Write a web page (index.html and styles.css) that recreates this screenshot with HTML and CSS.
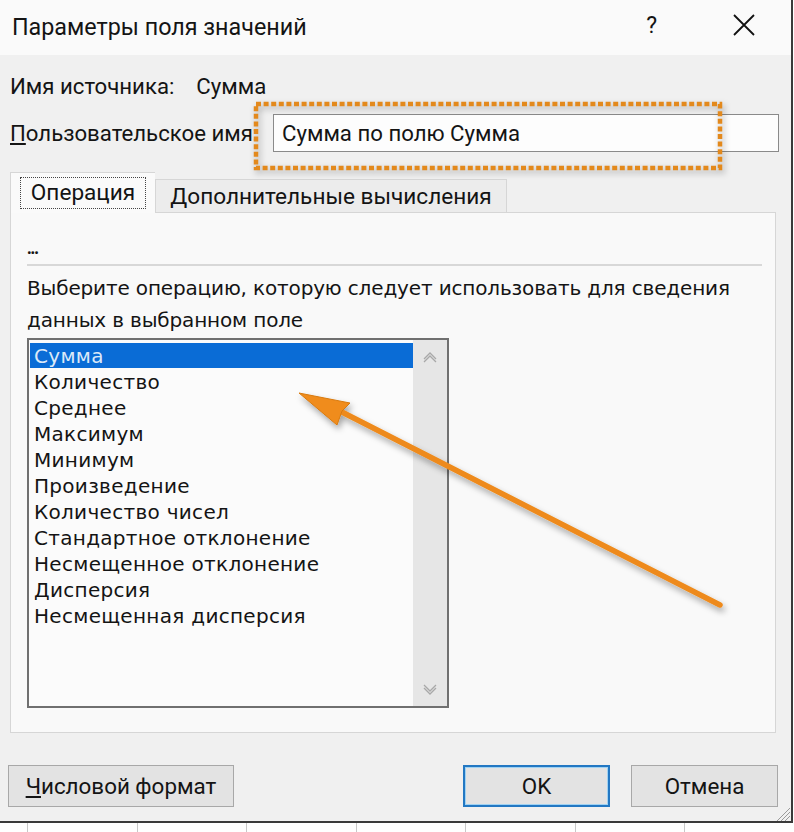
FILE: index.html
```html
<!DOCTYPE html>
<html lang="ru">
<head>
<meta charset="utf-8">
<title>Параметры поля значений</title>
<link rel="stylesheet" href="styles.css">
</head>
<body>
<div class="window">
  <div class="titlebar">
    <span class="title">Параметры поля значений</span>
    <span class="help">?</span>
    <svg class="close" width="22" height="22" viewBox="0 0 22 22"><path d="M1 1L21 21M21 1L1 21" stroke="#111" stroke-width="1.8" fill="none"/></svg>
  </div>
  <div class="body">
    <div class="source-row">
      <span class="src-label">Имя источника:</span>
      <span class="src-value">Сумма</span>
    </div>
    <div class="name-row">
      <span class="name-label"><u>П</u>ользовательское имя:</span>
      <div class="name-input">Сумма по полю Сумма</div>
    </div>
    <div class="tabs">
      <div class="tab active"><span class="focus">Операция</span></div>
      <div class="tab">Дополнительные вычисления</div>
    </div>
    <div class="panel">
      <div class="dots">...</div>
      <div class="sep"></div>
      <p class="desc">Выберите операцию, которую следует использовать для сведения данных в выбранном поле</p>
      <div class="listbox">
        <ul class="items">
          <li class="selected">Сумма</li>
          <li>Количество</li>
          <li>Среднее</li>
          <li>Максимум</li>
          <li>Минимум</li>
          <li>Произведение</li>
          <li>Количество чисел</li>
          <li>Стандартное отклонение</li>
          <li>Несмещенное отклонение</li>
          <li>Дисперсия</li>
          <li>Несмещенная дисперсия</li>
        </ul>
        <div class="scrollbar">
          <svg width="16" height="12" viewBox="0 0 16 12"><path d="M2 10L8 4L14 10M2 7L8 1L14 7" stroke="#a8a8a8" stroke-width="1.3" fill="none"/></svg>
          <svg width="16" height="12" viewBox="0 0 16 12"><path d="M2 2L8 8L14 2M2 5L8 11L14 5" stroke="#a8a8a8" stroke-width="1.3" fill="none"/></svg>
        </div>
      </div>
    </div>
    <div class="buttons">
      <button class="btn fmt"><u>Ч</u>исловой формат</button>
      <div class="spacer"></div>
      <button class="btn ok">OK</button>
      <button class="btn cancel">Отмена</button>
    </div>
  </div>
  <svg class="grip" width="16" height="14" viewBox="0 0 16 14"><path d="M15 1L2 14M15 5L6 14M15 9L10 14" stroke="#9a9a9a" stroke-width="1"/></svg>
  <svg class="highlight" width="476" height="76" viewBox="0 0 476 76"><rect x="5" y="5" width="464" height="64" fill="none" stroke="#e3891c" stroke-width="4.5" stroke-dasharray="5 2.6"/></svg>
  <svg class="arrow" width="794" height="832" viewBox="0 0 794 832">
    <defs>
      <filter id="sh" x="-10%" y="-10%" width="120%" height="130%">
        <feDropShadow dx="2" dy="4" stdDeviation="3" flood-color="#000" flood-opacity="0.35"/>
      </filter>
    </defs>
    <g filter="url(#sh)">
      <path d="M720 605L336 409" stroke="#ee8a1a" stroke-width="5.5" stroke-linecap="round"/>
      <path d="M299 393L350 403L342 411L337 425Z" fill="#f08c1c" stroke="#d87a10" stroke-width="1"/>
    </g>
  </svg>
</div>
<div class="grid">
  <span></span><span></span><span></span><span></span><span></span><span></span><span></span>
</div>
</body>
</html>
```
FILE: styles.css
```css
html, body {
  margin: 0;
  padding: 0;
}
body {
  width: 794px;
  height: 832px;
  overflow: hidden;
  background: #ffffff;
  font-family: "Open Sans", "Noto Sans", sans-serif;
  color: #141414;
}
.window {
  position: relative;
  width: 793px;
  height: 823px;
  background: #f0f0f0;
  border-right: 2px solid #3a3a3a;
  border-bottom: 2px solid #3a3a3a;
  box-sizing: border-box;
}
.titlebar {
  height: 55px;
  background: #fafafa;
  display: flex;
  align-items: center;
  padding-left: 12px;
  box-sizing: border-box;
}
.title {
  font-family: Roboto, "Liberation Sans", sans-serif;
  font-size: 23.3px;
  flex: 1;
  padding-bottom: 2px;
}
.help {
  font-family: Roboto, sans-serif;
  font-size: 23px;
  margin-right: 76px;
  padding-bottom: 4px;
}
.close {
  margin-right: 36px;
  margin-bottom: 5px;
}
.body {
  padding: 0 0 0 10px;
}
.source-row {
  height: 30px;
  margin-top: 16px;
  display: flex;
  align-items: center;
  font-family: Roboto, "Liberation Sans", sans-serif;
  font-size: 22.2px;
}
.src-value {
  margin-left: 22px;
}
.name-row {
  margin-top: 13px;
  display: flex;
  align-items: center;
  font-family: Roboto, "Liberation Sans", sans-serif;
  font-size: 22.2px;
}
.name-label {
  width: 263px;
}
.name-input {
  width: 506px;
  height: 38px;
  box-sizing: border-box;
  border: 1px solid #8a8a8a;
  background: #fdfdfd;
  padding-left: 8px;
  line-height: 36px;
  font-size: 22.2px;
}
.tabs {
  display: flex;
  align-items: flex-end;
  margin-top: 20px;
  height: 40px;
  font-family: Roboto, "Liberation Sans", sans-serif;
  font-size: 22.6px;
}
.tab {
  height: 33px;
  box-sizing: border-box;
  border: 1px solid #d6d6d6;
  border-bottom: none;
  background: #ececec;
  padding: 0 10px;
  display: flex;
  align-items: center;
  width: 352px;
  justify-content: center;
}
.tab.active {
  width: 145px;
  background: #fafafa;
  border-right: none;
  position: relative;
  z-index: 1;
  margin-bottom: -1px;
  height: 41px;
  padding: 0 6px;
}
.focus {
  border: 1.5px dotted #444;
  padding: 1px 10px 2px;
  line-height: 27px;
}
.panel {
  width: 766px;
  height: 521px;
  box-sizing: border-box;
  border: 1px solid #d6d6d6;
  background: #f9f9f9;
  padding: 25px 13px 0 16px;
}
.dots {
  font-size: 16px;
  font-weight: bold;
  line-height: 20px;
  letter-spacing: -1px;
  height: 26px;
}
.sep {
  height: 2px;
  background: #d8d8d8;
  width: 735px;
}
.desc {
  margin: 6px 0 0;
  font-family: "DejaVu Sans", Verdana, sans-serif;
  font-size: 20px;
  line-height: 32px;
  letter-spacing: -0.15px;
  width: 740px;
}
.listbox {
  margin-top: 2px;
  width: 422px;
  height: 370px;
  box-sizing: border-box;
  border: 2px solid #707070;
  background: #fbfbfb;
  display: flex;
}
.items {
  list-style: none;
  margin: 0;
  padding: 3px 0 0 1px;
  flex: 1;
  font-family: "DejaVu Sans", Verdana, sans-serif;
  font-size: 20px;
  letter-spacing: 0.3px;
}
.items li {
  height: 26px;
  line-height: 27px;
  padding-left: 4px;
}
.items li.selected {
  background: #0a6cd6;
  color: #dce9f8;
  height: 25px;
  line-height: 26px;
  margin-bottom: 1px;
}
.scrollbar {
  width: 34px;
  background: #e6e6e6;
  display: flex;
  flex-direction: column;
  justify-content: space-between;
  align-items: center;
  padding: 12px 0 11px;
  box-sizing: border-box;
}
.buttons {
  display: flex;
  margin-top: 32px;
  margin-left: -2px;
  width: 770px;
}
.spacer {
  flex: 1;
}
.btn {
  height: 42px;
  box-sizing: border-box;
  border: 1px solid #a8a8a8;
  background: #e3e3e3;
  font-family: Roboto, "Liberation Sans", sans-serif;
  font-size: 22.4px;
  color: #141414;
  padding: 0;
}
.fmt {
  width: 226px;
}
.ok {
  width: 147px;
  border: 2px solid #2378c3;
  box-shadow: inset 0 0 0 1px #9fd2f3;
}
.cancel {
  width: 147px;
  margin-left: 21px;
}
.grip {
  position: absolute;
  right: 0;
  bottom: 0;
}
.highlight {
  position: absolute;
  left: 251px;
  top: 99px;
  filter: drop-shadow(2px 3px 3px rgba(0,0,0,0.3));
}
.arrow {
  position: absolute;
  left: 0;
  top: 0;
  pointer-events: none;
}
.grid {
  display: flex;
  height: 9px;
  background: #fff;
  padding-left: 27px;
}
.grid span {
  width: 127px;
  border-left: 1px solid #c8c8c8;
}
```
